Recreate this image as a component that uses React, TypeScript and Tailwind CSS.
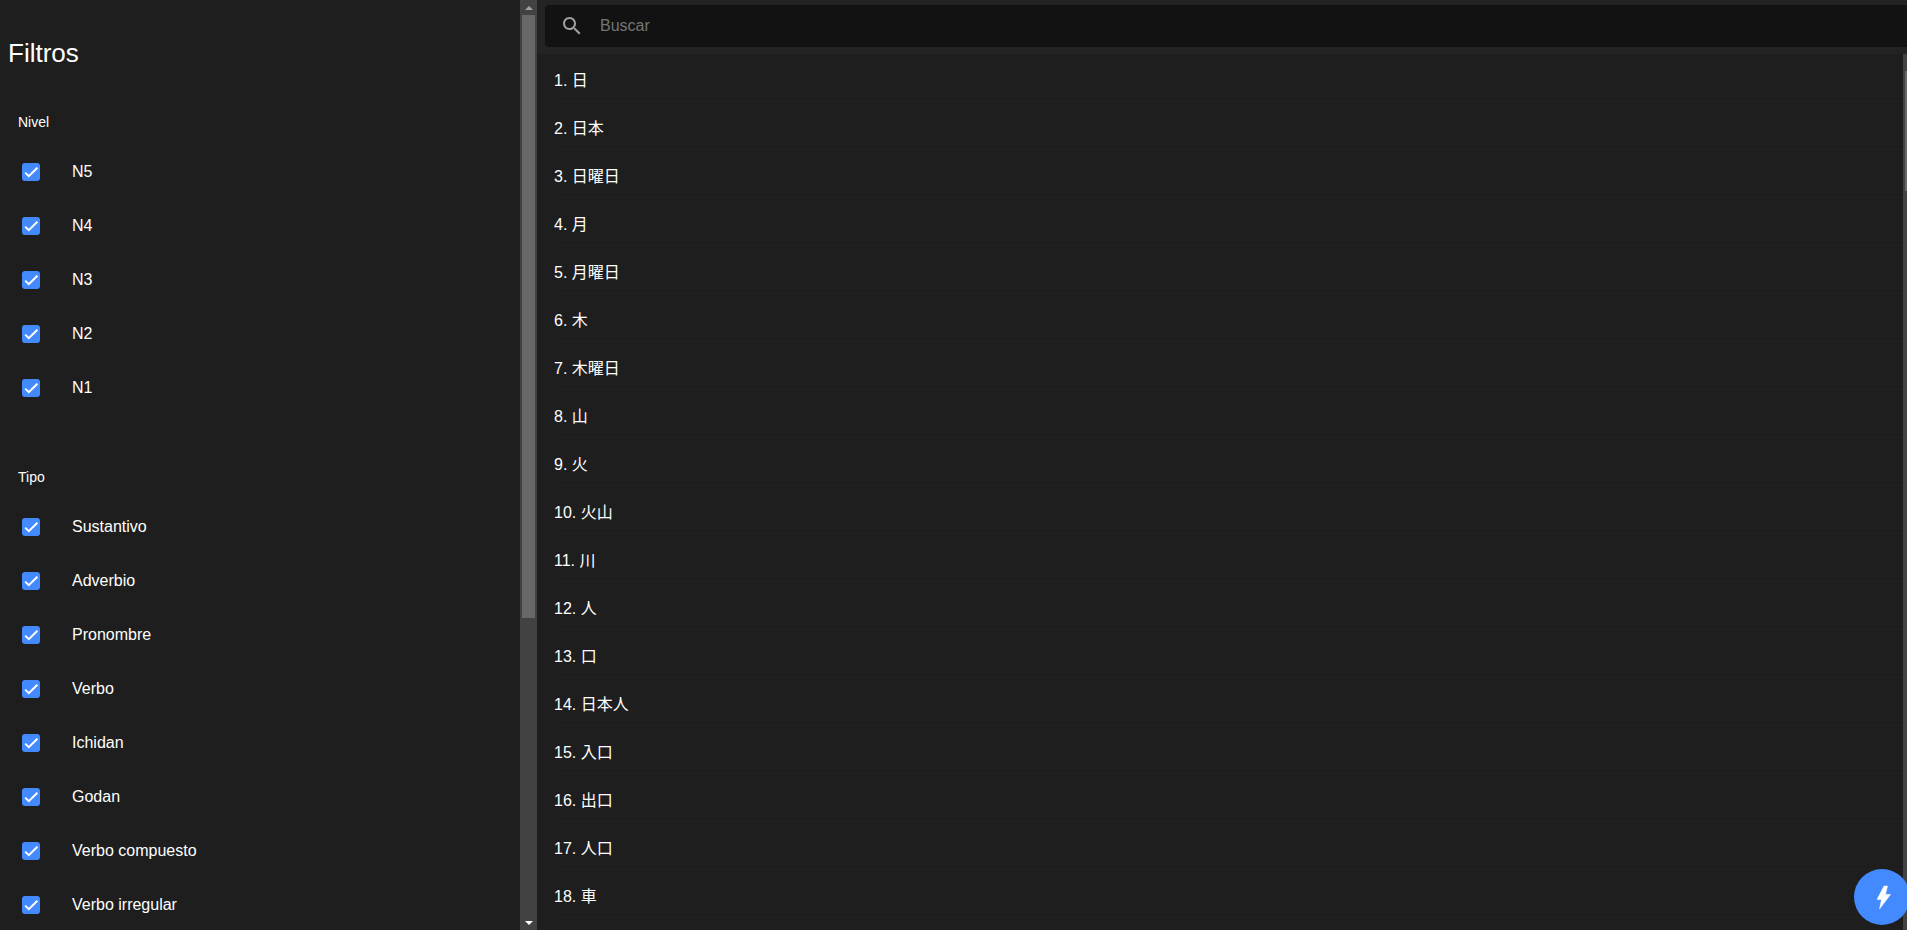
const niveles = ['N5', 'N4', 'N3', 'N2', 'N1'];
const tipos = ['Sustantivo', 'Adverbio', 'Pronombre', 'Verbo', 'Ichidan', 'Godan', 'Verbo compuesto', 'Verbo irregular'];
const palabras = ['日', '日本', '日曜日', '月', '月曜日', '木', '木曜日', '山', '火', '火山', '川', '人', '口', '日本人', '入口', '出口', '人口', '車'];

function FilterRow({ label }: { label: string }) {
  return (
    <label className="flex h-[54px] items-center pl-[22px] text-[16px] text-white">
      <span className="flex h-[18px] w-[18px] items-center justify-center rounded-[3px] bg-[#448aff]">
        <svg viewBox="0 0 18 18" className="h-[18px] w-[18px]" fill="none" stroke="#fff" strokeWidth={2}>
          <path d="M3.2 9.6l3.6 3.6 8.6-8.4" />
        </svg>
      </span>
      <span className="ml-[32px]">{label}</span>
    </label>
  );
}

function FilterGroup({ title, items }: { title: string; items: string[] }) {
  return (
    <div className="mb-[42px]">
      <div className="mb-[3px] flex h-[40px] items-center pl-[18px] text-[14px] text-white">{title}</div>
      {items.map((item) => (
        <FilterRow key={item} label={item} />
      ))}
    </div>
  );
}

export default function App() {
  return (
    <div
      className="flex h-[930px] w-[1907px] overflow-hidden bg-[#1e1e1e] text-white"
      style={{ fontFamily: '"Liberation Sans", "Noto Sans CJK JP", sans-serif' }}
    >
      {/* Filtros */}
      <aside className="h-full w-[520px] shrink-0 overflow-hidden bg-[#1e1e1e]">
        <h2 className="pl-[8px] pt-[36px] text-[26px] leading-[34px]">Filtros</h2>
        <div className="mt-[32px]">
          <FilterGroup title="Nivel" items={niveles} />
          <FilterGroup title="Tipo" items={tipos} />
        </div>
      </aside>

      {/* Scrollbar del panel */}
      <div className="flex h-full w-[17px] shrink-0 flex-col items-center bg-[#424242]">
        <div className="flex h-[15px] items-center justify-center">
          <div className="h-0 w-0 border-x-[4px] border-b-[4px] border-x-transparent border-b-[#a3a3a3]" />
        </div>
        <div className="h-[603px] w-[13px] bg-[#686868]" />
        <div className="flex-1" />
        <div className="flex h-[15px] items-center justify-center">
          <div className="h-0 w-0 border-x-[4px] border-t-[4px] border-x-transparent border-t-white" />
        </div>
      </div>

      {/* Lista */}
      <main className="relative flex h-full min-w-0 flex-1 flex-col">
        <div className="h-[54px] shrink-0 bg-[#232323] pl-[8px] pt-[5px]">
          <div className="flex h-[42px] items-center rounded-l-[4px] bg-[#121212] pl-[15px] text-[16px] text-[#757575]">
            <svg viewBox="0 0 24 24" className="h-[24px] w-[24px]" fill="#a0a0a0">
              <path d="M15.5 14h-.79l-.28-.27C15.41 12.59 16 11.11 16 9.5 16 5.91 13.09 3 9.5 3S3 5.91 3 9.5 5.91 16 9.5 16c1.61 0 3.09-.59 4.23-1.57l.27.28v.79l5 4.99L20.49 19l-4.99-5zm-6 0C7.01 14 5 11.99 5 9.5S7.01 5 9.5 5 14 7.01 14 9.5 11.99 14 9.5 14z" />
            </svg>
            <span className="ml-[16px]">Buscar</span>
          </div>
        </div>
        <div className="flex min-h-0 flex-1">
          <ul className="min-w-0 flex-1 overflow-hidden bg-[#1e1e1e] pl-[17px]">
            {palabras.map((p, i) => (
              <li key={p} className="flex h-[48px] items-center border-b border-[#222222] pt-[7px] text-[16px]">
                {i + 1}. {p}
              </li>
            ))}
          </ul>
          <div className="w-[4px] shrink-0 bg-[#424242] pl-[2px] pt-[17px]">
            <div className="h-[120px] w-[2px] bg-[#686868]" />
          </div>
        </div>

        <button className="absolute bottom-[5px] right-[-3px] flex h-[56px] w-[56px] items-center justify-center rounded-full bg-[#448aff]">
          <svg viewBox="0 0 34 34" className="h-[34px] w-[34px]" fill="#fff" stroke="#fff" strokeWidth={0.5} strokeLinejoin="round">
            <path d="M19 6h3.5l-2 8.5h5L14.5 29l2-9.5H12z" />
          </svg>
        </button>
      </main>
    </div>
  );
}
